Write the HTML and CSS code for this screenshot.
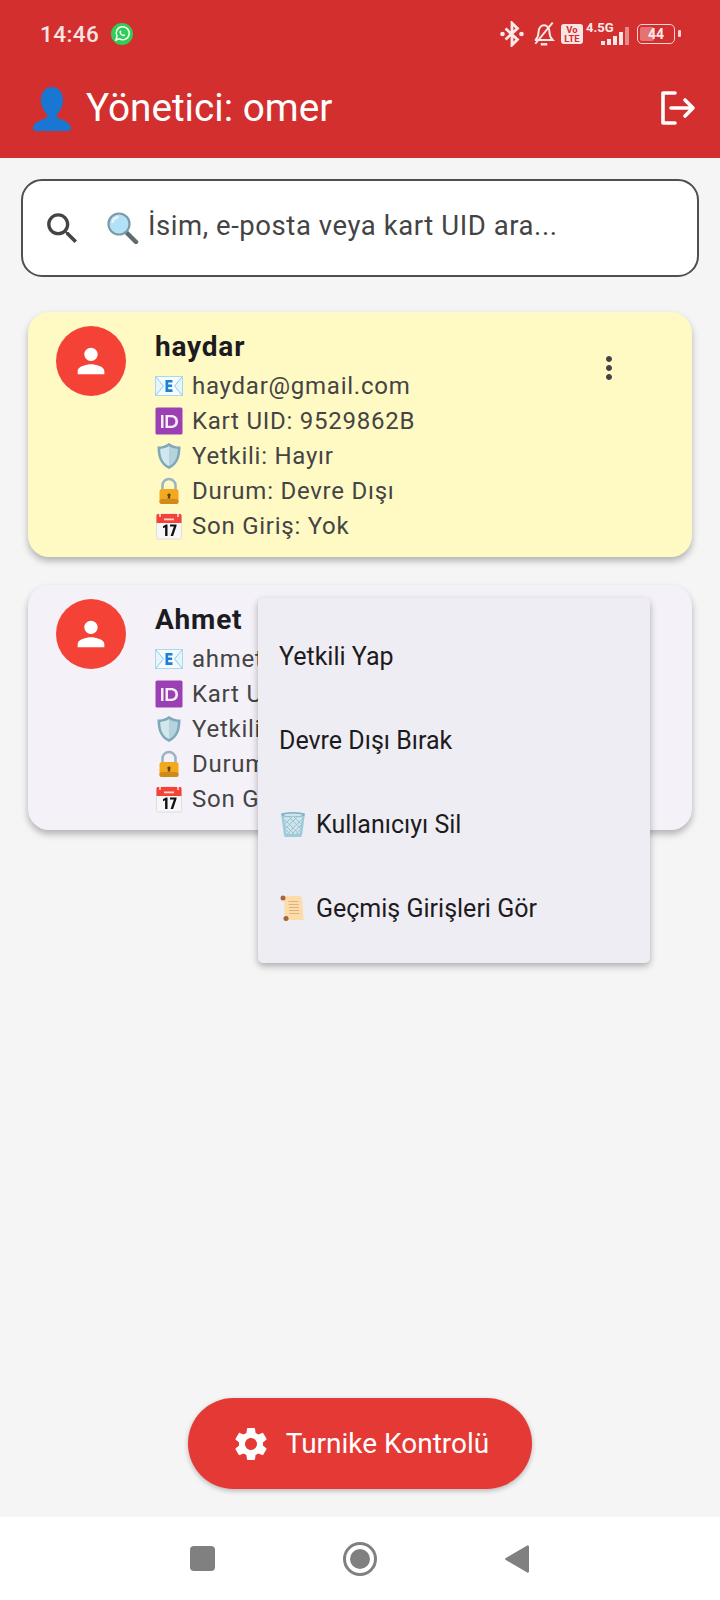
FILE: index.html
```html
<!DOCTYPE html>
<html lang="tr">
<head>
<meta charset="utf-8">
<title>Yönetici</title>
<link rel="stylesheet" href="styles.css">
</head>
<body>
<svg class="defs" width="0" height="0" aria-hidden="true">
  <symbol id="e-mail" viewBox="0 0 28 28">
    <rect x="0.5" y="4.500" width="27" height="19" fill="#f6fbfe" stroke="#a9d8f3"/>
    <path d="M1 5 8.500 14 1 23M27 5 19.500 14 27 23" fill="#e6f4fc" stroke="#8ccbee" stroke-width="1"/>
    <path d="M10.500 8h7v2.600h-4.300v2h3.900v2.400h-3.900v2.300h4.300V20h-7z" fill="#1e7fd6"/>
  </symbol>
  <symbol id="e-id" viewBox="0 0 28 28">
    <rect x="0.5" y="0.500" width="27" height="27" rx="1.500" fill="#9b3fb5"/>
    <path d="M6 8h2.500v13H6zM10.500 8H16c4.500 0 7 2.600 7 6.500S20.500 21 16 21h-5.500zm2.500 2.300v8.400h3c2.900 0 4.400-1.600 4.400-4.200s-1.500-4.200-4.400-4.200z" fill="#f6edf8"/>
  </symbol>
  <symbol id="e-shield" viewBox="0 0 28 28">
    <path d="M14 1c3 2.500 7 3.600 11.500 3.600 0 9-1.500 17.600-11.500 22.400C4 22.200 2.500 13.600 2.500 4.600 7 4.600 11 3.500 14 1z" fill="#7fa9b8"/>
    <path d="M14 4c2.500 1.800 5.500 2.700 8.800 2.900-.2 7.300-1.800 13.500-8.800 17.200z" fill="#b5d3dd"/>
    <path d="M14 4c-2.500 1.800-5.500 2.700-8.800 2.900.2 7.300 1.800 13.500 8.800 17.200z" fill="#d2e6ed"/>
  </symbol>
  <symbol id="e-lock" viewBox="0 0 28 28">
    <path d="M7.500 13V8.500a6.500 6.500 0 0 1 13 0V13" fill="none" stroke="#9fb4c2" stroke-width="2.600"/>
    <rect x="4.500" y="12" width="19" height="15" rx="2.500" fill="#f2a91d"/>
    <rect x="4.500" y="22" width="19" height="5" rx="2.500" fill="#d08a18"/>
    <path d="M14 16.500a1.600 1.600 0 0 1 1 2.900l.4 2.100h-2.800l.4-2.100a1.600 1.600 0 0 1 1-2.900z" fill="#5e4314"/>
  </symbol>
  <symbol id="e-cal" viewBox="0 0 28 28">
    <rect x="1.500" y="2" width="25" height="25" rx="1.500" fill="#f7f7f7" stroke="#dedede"/>
    <path d="M1.500 3.500A1.500 1.500 0 0 1 3 2h22a1.500 1.500 0 0 1 1.500 1.500V11h-25z" fill="#f44336"/>
    <path d="M5 1v4M23 1v4" stroke="#fff" stroke-width="1.300"/>
    <path d="M9 6.500h10v1.800H9z" fill="#ffd6d0"/>
    <path d="M8 14.200l3-1.700h1.500v11.500h-2.400v-8.800l-2.100 1zM15 12.500h6.500v1.600l-3.400 9.900h-2.500l3.300-9.400H15z" fill="#111"/>
  </symbol>
  <symbol id="e-trash" viewBox="0 0 28 28">
    <path d="M2 3.500h24l-3 22a2 2 0 0 1-2 1.500H7a2 2 0 0 1-2-1.500z" fill="#9ccbdc"/>
    <path d="M5 7h18l-2.300 17H7.300z" fill="#cfe3ea"/>
    <path d="M6 10l14 14M10 7l12 12M15 7l7 7M6 15l9 9M7 20l4 4M22 10L8 24M18 7L6 19M13 7l-7 7M22 15l-9 9M21 20l-4 4" stroke="#86b7cb" stroke-width=".7"/>
    <ellipse cx="14" cy="4.500" rx="12" ry="2.500" fill="#7fb2c6"/>
    <ellipse cx="14" cy="5" rx="9.500" ry="1.400" fill="#cfe3ea"/>
  </symbol>
  <symbol id="e-scroll" viewBox="0 0 28 28">
    <path d="M3 2h17c2 0 3 1 3 3l1.500 19c.1 1.500.5 2 1.500 2H8c-1.500 0-2.200-1-2.300-2L5 5c-.1-1.500-.8-2-2-3z" fill="#fbdcaa"/>
    <path d="M9.500 7.500h10M9.800 10.500h10M10 13.500h10M10.200 16.500h10M10.400 19.500h10" stroke="#d9ad78" stroke-width=".9"/>
    <circle cx="4" cy="4" r="2.500" fill="#a5643b"/>
    <circle cx="7" cy="24.500" r="2.500" fill="#a5643b"/>
  </symbol>
  <symbol id="i-person" viewBox="0 0 24 24">
    <path d="M12 12c2.210 0 4-1.790 4-4s-1.790-4-4-4-4 1.790-4 4 1.790 4 4 4zm0 2c-2.670 0-8 1.340-8 4v2h16v-2c0-2.660-5.330-4-8-4z"/>
  </symbol>
  <symbol id="i-more" viewBox="0 0 24 24">
    <path d="M12 8c1.100 0 2-.9 2-2s-.9-2-2-2-2 .9-2 2 .9 2 2 2zm0 2c-1.100 0-2 .9-2 2s.9 2 2 2 2-.9 2-2-.9-2-2-2zm0 6c-1.100 0-2 .9-2 2s.9 2 2 2 2-.9 2-2-.9-2-2-2z"/>
  </symbol>
</svg>

<div class="phone">
  <header class="appbar">
    <div class="status">
      <span class="time">14:46</span>
      <svg class="wa" viewBox="0 0 22 22"><circle cx="11" cy="11" r="11" fill="#2fcf57"/><path d="M5 17l1-3.600a6.500 6.500 0 1 1 2.500 2.500z" fill="none" stroke="#fff" stroke-width="1.500"/><path d="M8.800 7.800c.8-.8 1.200 0 1.500 1 .2.500-.5.800-.4 1.200.4.800 1 1.300 1.800 1.700.4.100.7-.6 1.200-.4 1 .4 1.700.8 1 1.500-1 1-2.500.5-3.900-.7-1.300-1.200-2-2.900-1.200-4.300z" fill="#fff"/></svg>
      <span class="status-gap"></span>
      <svg class="st-bt" viewBox="0 0 24 26"><path d="M5.500 7.500l12 11-5.500 5.500V2l5.500 5.500-12 11" fill="none" stroke="#fbeaea" stroke-width="2.800"/><circle cx="2.500" cy="13" r="2.300" fill="#fbeaea"/><circle cx="21.500" cy="13" r="2.300" fill="#fbeaea"/></svg>
      <svg class="st-bell" viewBox="0 0 22 24"><path d="M3.500 17c2-2 2.500-4 2.500-7 0-3.500 2.300-6 5-6s5 2.500 5 6c0 3 .5 5 3 7.500H2.500" fill="none" stroke="#fbeaea" stroke-width="1.800"/><path d="M8 21.500h6" stroke="#fbeaea" stroke-width="2.200"/><path d="M3 21L19 1.500" stroke="#fbeaea" stroke-width="1.800"/></svg>
      <span class="volte"><span>Vo</span><span>LTE</span></span>
      <span class="net">
        <span class="net-label">4.5G</span>
        <span class="bars"><i class="bar b1"></i><i class="bar b2"></i><i class="bar b3"></i><i class="bar b4"></i><i class="bar b5"></i></span>
      </span>
      <span class="battery"><span class="battery-fill"></span><span class="battery-num">44</span></span>
      <span class="nub"></span>
    </div>
    <div class="titlebar">
      <svg class="title-emoji" viewBox="0 0 40 44"><path d="M20 0c7 0 11 6 11 13 0 6-2.500 11-6 14v3c1 2.500 13 3 14 11 0 2-1 3-2.500 3h-33C2 44 1 43 1 41c1-8 13-8.500 14-11v-3c-3.500-3-6-8-6-14C9 6 13 0 20 0z" fill="#1976d2"/></svg>
      <h1 class="title">Yönetici: omer</h1>
      <svg class="logout" viewBox="0 0 36 34"><path d="M15 2H3v30h12" fill="none" stroke="#fff" stroke-width="3.600" stroke-linejoin="round" stroke-linecap="round"/><path d="M11 17h22M25 9l8 8-8 8" fill="none" stroke="#fff" stroke-width="3.600" stroke-linecap="round" stroke-linejoin="round"/></svg>
    </div>
  </header>

  <main class="content">
    <div class="search">
      <svg class="search-icon" viewBox="0 0 24 24"><path d="M15.500 14h-.79l-.28-.27C15.410 12.590 16 11.110 16 9.500 16 5.910 13.090 3 9.500 3S3 5.910 3 9.500 5.910 16 9.500 16c1.610 0 3.090-.59 4.230-1.570l.27.28v.79l5 4.990L20.490 19l-4.990-5zm-6 0C7.010 14 5 11.990 5 9.500S7.010 5 9.500 5 14 7.010 14 9.500 11.990 14 9.500 14z"/></svg>
      <svg class="search-emoji" viewBox="0 0 32 32"><path d="M19 20l10 10" stroke="#5f6b70" stroke-width="4.500" stroke-linecap="round"/><circle cx="12" cy="12" r="10.500" fill="#b3e2f8" stroke="#7d9aa8" stroke-width="2.200"/><path d="M5.500 11a6.500 6.500 0 0 1 6-6" fill="none" stroke="#e6f6fd" stroke-width="2.500"/></svg>
      <span class="placeholder">İsim, e-posta veya kart UID ara...</span>
    </div>

    <article class="card card-off">
      <div class="avatar"><svg class="avatar-icon"><use href="#i-person"/></svg></div>
      <div class="info">
        <div class="name">haydar</div>
        <div class="line"><svg class="emoji"><use href="#e-mail"/></svg>haydar@gmail.com</div>
        <div class="line"><svg class="emoji"><use href="#e-id"/></svg>Kart UID: 9529862B</div>
        <div class="line"><svg class="emoji"><use href="#e-shield"/></svg>Yetkili: Hayır</div>
        <div class="line"><svg class="emoji"><use href="#e-lock"/></svg>Durum: Devre Dışı</div>
        <div class="line"><svg class="emoji"><use href="#e-cal"/></svg>Son Giriş: Yok</div>
      </div>
      <svg class="more"><use href="#i-more"/></svg>
    </article>

    <article class="card card-on">
      <div class="avatar"><svg class="avatar-icon"><use href="#i-person"/></svg></div>
      <div class="info">
        <div class="name">Ahmet</div>
        <div class="line"><svg class="emoji"><use href="#e-mail"/></svg>ahmet</div>
        <div class="line"><svg class="emoji"><use href="#e-id"/></svg>Kart UID:</div>
        <div class="line"><svg class="emoji"><use href="#e-shield"/></svg>Yetkili:</div>
        <div class="line"><svg class="emoji"><use href="#e-lock"/></svg>Durum:</div>
        <div class="line"><svg class="emoji"><use href="#e-cal"/></svg>Son Giriş:</div>
      </div>
      <svg class="more"><use href="#i-more"/></svg>
    </article>

    <div class="spacer"></div>

    <button class="fab">
      <svg class="fab-icon" viewBox="0 0 24 24"><path d="M19.140 12.940c.04-.3.06-.61.06-.94 0-.32-.02-.64-.07-.94l2.030-1.580c.18-.14.23-.41.12-.61l-1.920-3.320c-.12-.22-.37-.29-.59-.22l-2.390.96c-.5-.38-1.030-.7-1.620-.94l-.36-2.540c-.04-.24-.24-.41-.48-.41h-3.840c-.24 0-.43.17-.47.41l-.36 2.540c-.59.24-1.130.57-1.620.94l-2.390-.96c-.22-.08-.47 0-.59.22L2.740 8.870c-.12.21-.08.47.12.61l2.030 1.580c-.05.3-.09.63-.09.94s.02.64.07.94l-2.030 1.580c-.18.14-.23.41-.12.61l1.920 3.320c.12.22.37.29.59.22l2.390-.96c.5.38 1.030.7 1.620.94l.36 2.540c.05.24.24.41.48.41h3.840c.24 0 .44-.17.47-.41l.36-2.540c.59-.24 1.130-.56 1.620-.94l2.390.96c.22.08.47 0 .59-.22l1.920-3.320c.12-.22.07-.47-.12-.61l-2.010-1.580zM12 15.600c-1.980 0-3.600-1.620-3.600-3.600s1.620-3.600 3.600-3.600 3.600 1.620 3.600 3.600-1.620 3.600-3.600 3.600z"/></svg>
      <span>Turnike Kontrolü</span>
    </button>
  </main>

  <nav class="navbar">
    <span class="nav-square"></span>
    <span class="nav-circle"><span class="nav-dot"></span></span>
    <svg class="nav-back" viewBox="0 0 24 28"><path d="M24 1.500v25a1.200 1.200 0 0 1-1.800 1L.8 15a1.200 1.200 0 0 1 0-2L22.200.5A1.200 1.200 0 0 1 24 1.500z"/></svg>
  </nav>

  <div class="menu">
    <div class="menu-item">Yetkili Yap</div>
    <div class="menu-item">Devre Dışı Bırak</div>
    <div class="menu-item"><svg class="menu-emoji"><use href="#e-trash"/></svg>Kullanıcıyı Sil</div>
    <div class="menu-item"><svg class="menu-emoji"><use href="#e-scroll"/></svg>Geçmiş Girişleri Gör</div>
  </div>
</div>
</body>
</html>
```

FILE: styles.css
```css
* { box-sizing: border-box; }
html, body { margin: 0; padding: 0; }
body { font-family: Roboto, "Noto Sans", sans-serif; background: #f5f5f5; }
.defs { position: absolute; }
.phone { position: relative; width: 720px; height: 1600px; display: flex; flex-direction: column; overflow: hidden; background: #f5f5f5; }

.appbar { height: 158px; background: #d32f2f; color: #fff; flex: none; }
.status { height: 67px; display: flex; align-items: center; padding: 0 39px 0 40px; }
.time { font-size: 22.500px; font-weight: 500; letter-spacing: .4px; color: #f7e3e3; }
.wa { width: 22px; height: 22px; margin-left: 12px; }
.status-gap { flex: 1; }
.st-bt { width: 24px; height: 26px; }
.st-bell { width: 24px; height: 26px; margin-left: 8px; }
.volte { width: 22px; height: 20px; margin-left: 5px; background: #f8e6e6; color: #d32f2f; border-radius: 3px; display: flex; flex-direction: column; align-items: center; justify-content: center; font-size: 9.500px; font-weight: 700; line-height: 9px; }
.net { position: relative; width: 43px; height: 22px; margin-left: 3px; }
.net-label { position: absolute; left: 0; top: -2px; font-size: 13px; font-weight: 700; line-height: 14px; color: #fbeaea; }
.bars { position: absolute; right: 0; bottom: 0; display: flex; align-items: flex-end; gap: 2px; }
.bar { display: block; width: 4px; background: #f8e6e6; }
.b1 { height: 4px; }
.b2 { height: 6px; }
.b3 { height: 9px; }
.b4 { height: 13px; }
.b5 { height: 18px; background: #e58a8a; }
.battery { position: relative; width: 38px; height: 20px; margin-left: 8px; border: 1.500px solid #f5d5d5; border-radius: 5px; display: flex; align-items: center; justify-content: center; }
.battery-fill { position: absolute; left: 2px; top: 2px; bottom: 2px; width: 14px; background: #e57373; border-radius: 2px; }
.battery-num { position: relative; font-size: 14px; font-weight: 700; color: #fbeaea; }
.nub { width: 3px; height: 7px; margin-left: 3px; background: #f5d5d5; border-radius: 1px; }

.titlebar { height: 81px; display: flex; align-items: center; padding: 0 24px 0 32px; }
.title-emoji { width: 40px; height: 44px; margin-top: 2px; }
.title { flex: 1; margin: 0 0 0 14px; font-size: 38.700px; font-weight: 400; line-height: 44px; }
.logout { width: 36px; height: 34px; }

.content { flex: 1; display: flex; flex-direction: column; align-items: stretch; padding: 21px 21px 28px 21px; min-height: 0; }
.search { height: 98px; flex: none; background: #fff; border: 2px solid #4f4f4f; border-radius: 21px; display: flex; align-items: center; padding-left: 19px; }
.search-icon { width: 41px; height: 41px; fill: #444; }
.search-emoji { width: 32px; height: 32px; margin-left: 24px; }
.placeholder { margin-left: 9px; margin-bottom: 5px; font-size: 27.500px; letter-spacing: .56px; color: #444; }

.card { position: relative; flex: none; margin: 35px 7px 0 7px; height: 245px; border-radius: 21px; display: flex; align-items: flex-start; padding: 14px 0 0 28px; box-shadow: 0 4px 7px rgba(0,0,0,.28); }
.card + .card { margin-top: 28px; }
.card-off { background: #fff9c4; }
.card-on { background: #f4f1f9; }
.avatar { width: 70px; height: 70px; flex: none; border-radius: 50%; background: #f44336; display: flex; align-items: center; justify-content: center; }
.avatar-icon { width: 40px; height: 40px; fill: #fff; }
.info { margin-left: 29px; padding-top: 3px; }
.name { font-size: 28px; font-weight: 700; letter-spacing: .8px; line-height: 36px; color: #1c1b1f; margin-bottom: 3px; }
.line { display: flex; align-items: center; height: 35px; font-size: 24px; letter-spacing: .75px; color: #444; white-space: nowrap; }
.emoji { width: 28px; height: 28px; margin-right: 9px; flex: none; }
.more { position: absolute; right: 65px; top: 38px; width: 36px; height: 36px; fill: #444; }

.spacer { flex: 1; }
.fab { align-self: flex-start; margin-left: 167px; width: 344px; height: 91px; border: 0; border-radius: 46px; background: #e53935; color: #fff; display: flex; align-items: center; justify-content: center; gap: 15px; font-family: inherit; font-size: 28px; box-shadow: 0 2px 5px rgba(0,0,0,.25); }
.fab-icon { width: 40px; height: 40px; fill: #fff; }

.navbar { height: 83px; flex: none; background: #fff; display: flex; align-items: center; padding: 0 191px 0 190px; justify-content: space-between; }
.nav-square { width: 25px; height: 25px; border-radius: 4px; background: #808080; }
.nav-circle { width: 34px; height: 34px; border: 3px solid #808080; border-radius: 50%; display: flex; align-items: center; justify-content: center; }
.nav-dot { width: 20px; height: 20px; border-radius: 50%; background: #808080; }
.nav-back { width: 24px; height: 28px; fill: #808080; }

.menu { position: absolute; left: 258px; top: 598px; width: 392px; height: 365px; background: #efedf4; border-radius: 5px; box-shadow: 0 3px 7px rgba(0,0,0,.3); padding: 16px 0 0; display: flex; flex-direction: column; }
.menu-item { height: 84px; display: flex; align-items: center; padding-left: 21px; font-size: 25px; color: #1d1b20; flex: none; }
.menu-emoji { width: 28px; height: 28px; margin-right: 9px; flex: none; }
```
